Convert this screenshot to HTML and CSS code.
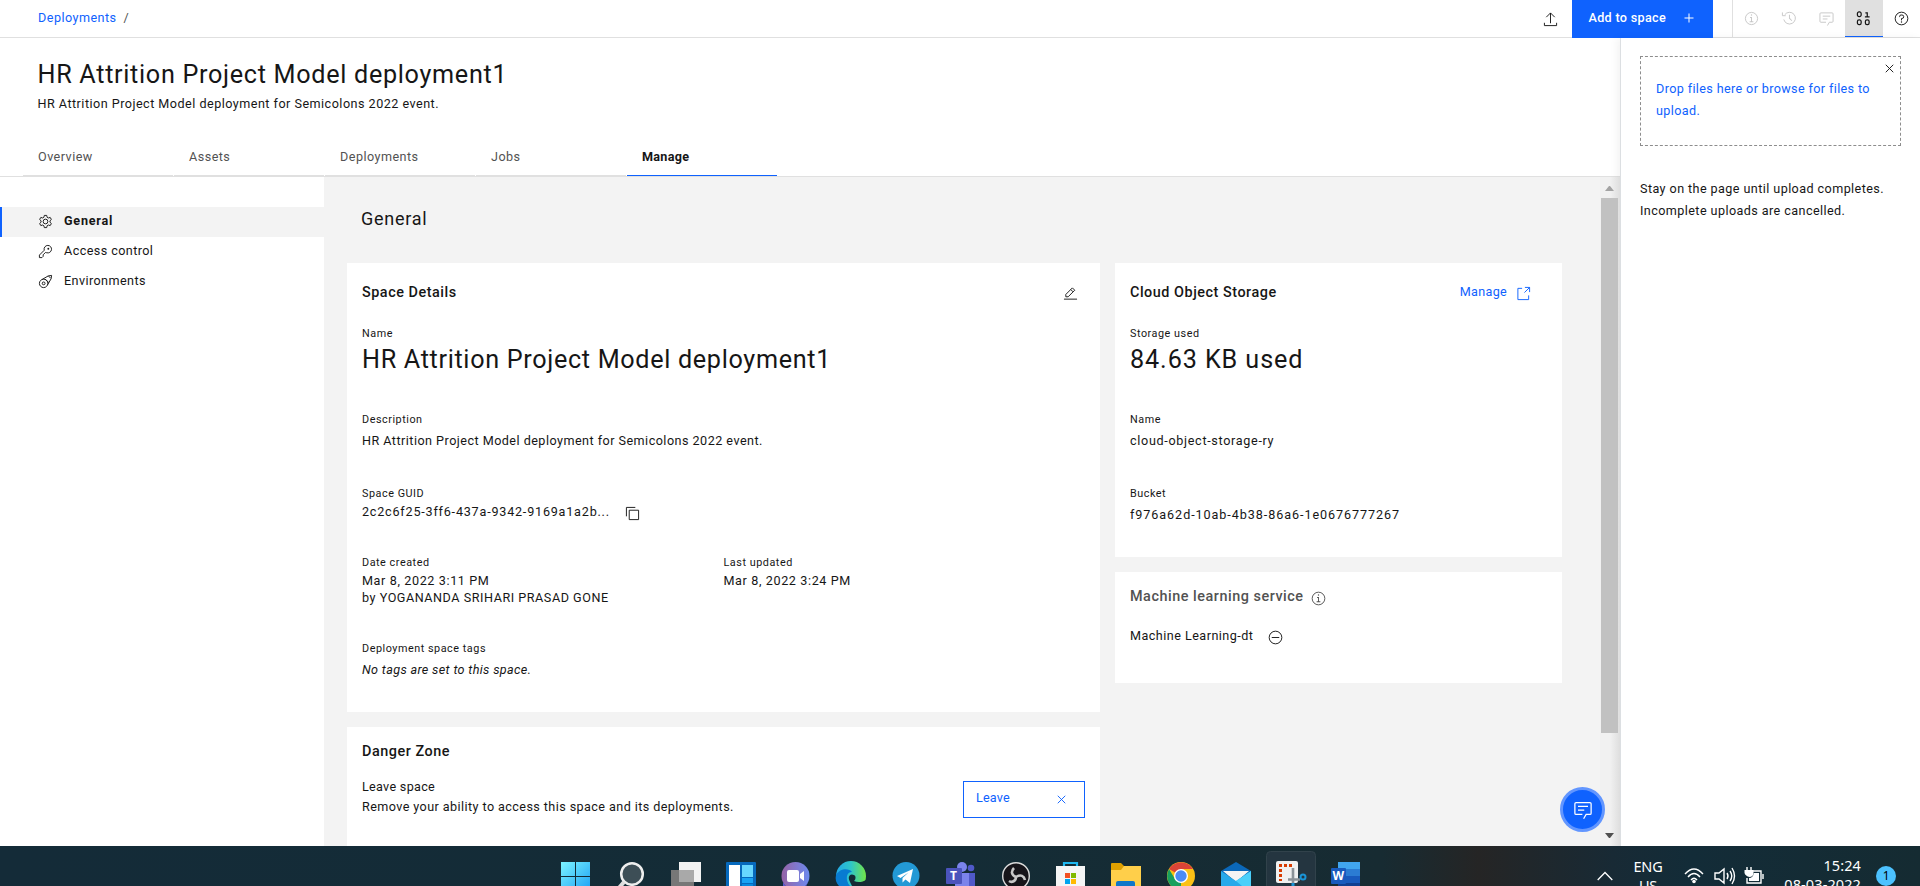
FILE: index.html
```html
<!DOCTYPE html>
<html lang="en">
<head>
<meta charset="utf-8">
<title>Deployments</title>
<link rel="stylesheet" href="styles.css">
</head>
<body>
<div class="screen">
  <header class="topbar">
    <nav class="crumbs"><a class="link">Deployments</a><span class="slash">/</span></nav>
    <div class="actions">
      <svg class="icon upload" viewBox="0 0 32 32"><path class="ln" d="M16 24V2M7 11l9-9 9 9M3 23v6h26v-6"/></svg>
      <button class="add"><span>Add to space</span><svg viewBox="0 0 32 32"><path d="M17 15V7h-2v8H7v2h8v8h2v-8h8v-2z"/></svg></button>
      <div class="tools">
        <div class="tool dim"><svg class="icon" viewBox="0 0 32 32"><path d="M17 22v-9h-4v2h2v7h-3v2h8v-2zM16 7a1.5 1.5 0 1 0 0 3 1.5 1.5 0 0 0 0-3z"/><circle class="ln" cx="16" cy="16" r="13"/></svg></div>
        <div class="tool dim"><svg class="icon" viewBox="0 0 32 32"><path d="M22.600 21.400 17 15.800V8h2v7l5 5z"/><path class="ln" d="M6 18A12.500 12.500 0 1 0 8 8M3 3v7h7"/></svg></div>
        <div class="tool dim"><svg class="icon" viewBox="0 0 32 32"><path class="ln" d="M18 31l4-7h6a2 2 0 0 0 2-2V6a2 2 0 0 0-2-2H4a2 2 0 0 0-2 2v16a2 2 0 0 0 2 2h11M8 11h16M8 17h10"/></svg></div>
        <div class="tool active"><svg class="icon" viewBox="0 0 32 32"><g class="ln bold"><rect x="3" y="2" width="8" height="10" rx="3.500"/><rect x="3" y="19" width="8" height="10" rx="3.500"/><rect x="20" y="19" width="8" height="10" rx="3.500"/><path d="M20 4h4v8.500M19 12.500h10"/></g></svg></div>
        <div class="tool"><svg class="icon" viewBox="0 0 32 32"><circle class="ln" cx="16" cy="16" r="13.500"/><path class="ln" d="M12 13v-1.500a3 3 0 0 1 3-3h2a3.500 3.500 0 0 1 0 7.500h-1v4"/><circle cx="16" cy="23.500" r="1.500"/></svg></div>
      </div>
    </div>
  </header>

  <div class="workspace">
    <main class="page">
      <section class="head">
        <h1>HR Attrition Project Model deployment1</h1>
        <p>HR Attrition Project Model deployment for Semicolons 2022 event.</p>
        <nav class="tabs"><a>Overview</a><a>Assets</a><a>Deployments</a><a>Jobs</a><a class="on">Manage</a></nav>
      </section>
      <div class="body">
        <aside class="side">
          <a class="on"><svg class="icon" viewBox="0 0 32 32"><path class="ln" d="M13.500 3h5l1 4 2.500 1.500 4-1.200 2.500 4.400-3 2.800v3l3 2.800-2.500 4.400-4-1.200-2.500 1.500-1 4h-5l-1-4L10 23.500l-4 1.200-2.500-4.400 3-2.800v-3l-3-2.800L6 7.300l4 1.200L12.500 7z"/><circle class="ln" cx="16" cy="16" r="5"/></svg>General</a>
          <a><svg class="icon" viewBox="0 0 32 32"><path class="ln" d="M21 3a8 8 0 0 0-7.700 10.300L3 23.600V29h5.400l2.600-2.600V23l5-5 2.700.700A8 8 0 1 0 21 3z"/><circle cx="22" cy="10" r="2"/></svg>Access control</a>
          <a><svg class="icon" viewBox="0 0 32 32"><circle class="ln" cx="12" cy="20" r="9"/><circle class="ln" cx="12" cy="20" r="3"/><path class="ln" d="M9 11.500 22 4l7-1-1 7-7.500 13M15 11l8 7M22 4l5 5"/></svg>Environments</a>
        </aside>
        <section class="content">
          <h2>General</h2>
          <div class="columns">
            <div class="col left">
              <article class="card details">
                <div class="cardhead"><h3>Space Details</h3><svg class="icon" viewBox="0 0 32 32"><path d="M2 27h28v2H2z"/><path class="ln" d="M6 23v-5L20 4l5 5-14 14zM16.500 7.500l5 5"/></svg></div>
                <div class="label">Name</div>
                <div class="big">HR Attrition Project Model deployment1</div>
                <div class="label l2">Description</div>
                <div class="value v2">HR Attrition Project Model deployment for Semicolons 2022 event.</div>
                <div class="label l3">Space GUID</div>
                <div class="value guid">2c2c6f25-3ff6-437a-9342-9169a1a2b...<svg class="icon" viewBox="0 0 32 32"><path class="ln" d="M9 9h20v20H9zM3 22V3h19"/></svg></div>
                <div class="dates">
                  <div><div class="label">Date created</div><div class="value date">Mar 8, 2022 3:11 PM</div><div class="value by">by YOGANANDA SRIHARI PRASAD GONE</div></div>
                  <div><div class="label">Last updated</div><div class="value date">Mar 8, 2022 3:24 PM</div></div>
                </div>
                <div class="label">Deployment space tags</div>
                <div class="value v2 none">No tags are set to this space.</div>
              </article>
              <article class="card danger">
                <div><h3>Danger Zone</h3><div class="value leave">Leave space</div><div class="value remove">Remove your ability to access this space and its deployments.</div></div>
                <button class="leavebtn"><span>Leave</span><svg viewBox="0 0 32 32"><path class="ln" d="M8 8l16 16M24 8 8 24"/></svg></button>
              </article>
            </div>
            <div class="col right">
              <article class="card storage">
                <div class="cardhead"><h3>Cloud Object Storage</h3><a class="link manage">Manage<svg class="icon" viewBox="0 0 32 32"><path class="ln" d="M13 5H4v24h23v-9M19 3h10v10M29 3 18 14"/></svg></a></div>
                <div class="label">Storage used</div>
                <div class="big used">84.63 KB used</div>
                <div class="label l2">Name</div>
                <div class="value v2 cos">cloud-object-storage-ry</div>
                <div class="label l3">Bucket</div>
                <div class="value v2 bucket">f976a62d-10ab-4b38-86a6-1e0676777267</div>
              </article>
              <article class="card ml">
                <h3>Machine learning service<svg class="icon" viewBox="0 0 32 32"><path d="M17 22v-9h-4v2h2v7h-3v2h8v-2zM16 7a1.500 1.500 0 1 0 0 3 1.500 1.500 0 0 0 0-3z"/><circle class="ln" cx="16" cy="16" r="13.500"/></svg></h3>
                <div class="value mlrow">Machine Learning-dt<svg class="icon" viewBox="0 0 32 32"><circle class="ln" cx="16" cy="16" r="13.500"/><path class="ln" d="M8 16h16"/></svg></div>
              </article>
            </div>
          </div>
        </section>
        <div class="scroll"><i class="up"></i><i class="thumb"></i><i class="down"></i></div>
        <button class="chat"><svg viewBox="0 0 32 32"><path class="ln" d="M17 30l4-7h6a2 2 0 0 0 2-2V6a2 2 0 0 0-2-2H5a2 2 0 0 0-2 2v15a2 2 0 0 0 2 2h10M8 10h16M8 16h10"/></svg></button>
      </div>
    </main>
    <aside class="panel">
      <div class="drop"><svg viewBox="0 0 32 32"><path class="ln" d="M8 8l16 16M24 8 8 24"/></svg>Drop files here or browse for files to upload.</div>
      <p>Stay on the page until upload completes. Incomplete uploads are cancelled.</p>
    </aside>
  </div>

  <footer class="taskbar">
    <div class="apps">
      <svg viewBox="0 0 54 40"><defs><linearGradient id="win" x2="1" y2="1"><stop stop-color="#7cf3ff"/><stop offset="1" stop-color="#1ba0f5"/></linearGradient></defs><path fill="url(#win)" d="M13 16h14v14H13zM28 16h14v14H28zM13 31h14v14H13zM28 31h14v14H28z"/></svg>
      <svg viewBox="0 0 54 40"><circle cx="29" cy="28" r="10.800" fill="#3d4e56" stroke="#eee" stroke-width="2.500"/><path d="M21 36l-6 7" stroke="#ddd" stroke-width="4"/></svg>
      <svg viewBox="0 0 54 40"><path fill="#f2f2f2" d="M21 16h22v20H21z"/><path fill="#777" d="M13 24h23v16H13z"/><path fill="#a9a9a9" d="M21 24h15v12H21z"/></svg>
      <svg viewBox="0 0 54 40"><rect x="13" y="16" width="30" height="30" rx="1" fill="#0669bd"/><path fill="#fff" d="M16 19h11v24H16z"/><path fill="#67d7ff" d="M29 19h11v12H29z"/><path fill="#19a3f4" d="M29 32h11v5H29z"/><path fill="#0789df" d="M29 38h11v4H29z"/></svg>
      <svg viewBox="0 0 54 40"><defs><linearGradient id="meet" x2="1"><stop stop-color="#9663a5"/><stop offset="1" stop-color="#6c8af0"/></linearGradient></defs><circle cx="27.500" cy="30" r="14" fill="url(#meet)"/><path fill="#5a58cc" d="M15 36a14 14 0 0 0 25 0l-3 7H15z"/><rect x="19" y="24" width="12" height="12" rx="2" fill="#fff"/><path fill="#fff" d="M32 28l4-3v10l-4-3z"/></svg>
      <svg viewBox="0 0 54 40"><defs><linearGradient id="edge" x2="1"><stop stop-color="#22a8e8"/><stop offset=".5" stop-color="#2fc6c7"/><stop offset="1" stop-color="#72e547"/></linearGradient></defs><circle cx="28" cy="30" r="15" fill="url(#edge)"/><path fill="#087bd1" d="M13 29c4-7 13-7 16-3-6 0-7 8-2 14H16c-3-3-4-7-3-11z"/><path fill="#142a34" d="M27 36c-3-5 0-9 4-7 2 1 2 4 0 6 4 2 9 1 12-1v8H30z"/></svg>
      <svg viewBox="0 0 54 40"><circle cx="28" cy="29.500" r="13.500" fill="#2399d5"/><path fill="#fff" d="M19 30l16-7-3 14-4.500-3.500-3 3v-4.500l6-5.500-8 5.500z"/></svg>
      <svg viewBox="0 0 54 40"><circle cx="29" cy="21" r="5" fill="#7b83eb"/><circle cx="38" cy="22" r="3.300" fill="#5059c9"/><path fill="#5059c9" d="M30 27h12v13H30z"/><path fill="#7b83eb" d="M22 27h14v13H22z"/><rect x="13" y="22" width="16" height="16" rx="1" fill="#4b53bc"/><text class="glyph" x="17" y="34">T</text></svg>
      <svg viewBox="0 0 54 40"><circle cx="28" cy="30" r="13.300" fill="#17151a" stroke="#ddd" stroke-width="1.400"/><path fill="none" stroke="#c8c8c8" stroke-width="2.600" d="M28 31c-5-2-5-6-2-9M28 31c5-3 8-1 9 3M28 31c0 4-4 6-7 4"/></svg>
      <svg viewBox="0 0 54 40"><path fill="none" stroke="#1fb8f0" stroke-width="2.200" d="M21 22v-5h13v5"/><path fill="#f5f5f5" d="M13 20h29v20H13z"/><path fill="#f25022" d="M22 27h5v5h-5z"/><path fill="#7fba00" d="M28 27h5v5h-5z"/><path fill="#00a4ef" d="M22 33h5v5h-5z"/><path fill="#ffb900" d="M28 33h5v5h-5z"/></svg>
      <svg viewBox="0 0 54 40"><path fill="#dfa000" d="M13 18q0-1 1-1h9l3 3v8H13z"/><path fill="#ffcf4a" d="M13 24h10l3-4h17v20H13z"/><path fill="#0f76c8" d="M18 40v-3q0-2 2-2h15q2 0 2 2v3z"/></svg>
      <svg viewBox="0 0 54 40"><circle cx="28" cy="30" r="14" fill="#fbc116"/><path fill="#db4437" d="M28 30 16 23a14 14 0 0 1 24 0H28z"/><path fill="#18a05e" d="M28 44A14 14 0 0 1 16 23l6 10 6 3z"/><circle cx="28" cy="30" r="7" fill="#fff"/><circle cx="28" cy="30" r="5.700" fill="#4b8bf5"/></svg>
      <svg viewBox="0 0 54 40"><path fill="#0b68b9" d="M13 25l15-9 15 9v5H13z"/><path fill="#f4f4f4" d="M15 25h26L28 36z"/><path fill="#27a9ea" d="M13 25l15 10 15-10v15H13z"/><path fill="#4bd0fa" d="M28 35l15-10v15h-9z"/></svg>
      <svg viewBox="0 0 54 40"><rect x="3.500" y="5.500" width="49" height="50" rx="4" fill="#243540" stroke="#31424b"/><rect x="13" y="15" width="22" height="22" rx="2" fill="#f0f0f0"/><path fill="#d83b01" d="M16 18h3v3h-3zM21 18h3v3h-3zM26 18h3v3h-3zM16 23h3v3h-3zM16 28h3v3h-3zM16 33h3v2h-3z"/><path fill="none" stroke="#8c9298" stroke-width="2.600" d="M30 22v15M25 33.500h12"/><circle cx="40" cy="31" r="2.500" fill="none" stroke="#1a94d6" stroke-width="2"/><path stroke="#1a94d6" stroke-width="3" d="M30 37v3"/></svg>
      <svg viewBox="0 0 54 40"><path fill="#41a5ee" d="M20 16h22v8H20z"/><path fill="#2b7cd3" d="M20 23h22v7H20z"/><path fill="#185abd" d="M20 30h22v7H20z"/><path fill="#103f91" d="M20 37h22v3H20z"/><rect x="13" y="22" width="15" height="16" rx="1" fill="#185abd"/><text class="glyph" x="14.500" y="34">W</text></svg>
    </div>
    <div class="tray">
      <svg class="caret" viewBox="0 0 16 10"><path d="M.7 9 8 1.500 15.300 9"/></svg>
      <div class="lang">ENG<br>US</div>
      <svg class="trayicons" viewBox="0 0 82 18"><g fill="none" stroke="#fff" stroke-width="1.400"><path d="M1 7q9-10 18 0M4 10q6-7 12 0M7 13q3-3.500 6 0"/><path d="M31 6h4l5-4v14l-5-4h-4zM43 6q2 3 0 6M46 4q3.500 5 0 10M48 1q5 8 0 16"/><path d="M69 4h8v12H63v-5M79 7v5M63 0v4M67 0v4"/></g><circle cx="10" cy="14.500" r="1.800" fill="#fff"/><path fill="#fff" d="M60.500 3h9v4q-1 3-4 3-4-1-5-4zM70 6h5v8H65v-3q4 0 5-5z"/></svg>
      <div class="clock">15:24<br>08-03-2022</div>
      <div class="badge">1</div>
    </div>
  </footer>
</div>
</body>
</html>
```
FILE: styles.css
```css
* { box-sizing: border-box; margin: 0; }
body { width: 1920px; height: 886px; overflow: hidden; background: #fff; color: #161616; font: 12.6px/16px Roboto, "Noto Sans", sans-serif; letter-spacing: .47px; }
button { font: inherit; letter-spacing: inherit; border: 0; padding: 0; }
svg { display: block; flex: none; fill: currentColor; overflow: visible; }
.ln { fill: none; stroke: currentColor; stroke-width: 2; }
.ln.bold { stroke-width: 2.6; }
.icon { width: 15px; height: 15px; }
.link { color: #0f62fe; }
.screen { height: 886px; display: flex; flex-direction: column; }

.topbar { height: 38px; flex: none; display: flex; justify-content: space-between; border-bottom: 1px solid #e0e0e0; }
.crumbs { display: flex; gap: 7px; padding: 10px 0 0 38px; }
.slash { color: #525252; }
.actions { display: flex; }
.upload { margin: 12px 14px 0 0; }
.add { width: 141px; height: 38px; display: flex; justify-content: space-between; background: #0f62fe; color: #fff; padding: 10px 16px 0 17px; font-weight: 500; letter-spacing: .32px; }
.add svg { width: 16px; height: 16px; }
.tools { display: flex; margin-left: 19px; border-left: 1px solid #e0e0e0; }
.tool { width: 37.5px; height: 37px; display: grid; place-items: center; }
.dim { color: #c6c6c6; }
.active { background: #e0e0e0; border-bottom: 1px solid #0f62fe; }

.workspace { display: flex; height: 808px; }
.page { width: 1620px; display: flex; flex-direction: column; }
.head { height: 139px; flex: none; border-bottom: 1px solid #e0e0e0; }
h1 { font-size: 25.2px; font-weight: 400; line-height: 32px; padding: 21px 0 0 37.5px; letter-spacing: .69px; }
.head p { padding: 5px 0 0 37.5px; letter-spacing: .48px; }
.tabs { display: flex; gap: 1px; margin: 34px 0 0 23px; }
.tabs a { width: 150px; height: 30px; padding: 3px 0 0 15px; color: #525252; border-bottom: 1px solid #e0e0e0; }
.tabs .on { color: #161616; font-weight: 700; letter-spacing: .3px; border-color: #0f62fe; }
.body { display: flex; flex: 1; min-height: 0; position: relative; }
.side { width: 324px; padding-top: 30px; }
.side a { display: flex; gap: 11px; height: 30px; padding: 6px 0 0 36px; border-left: 2px solid transparent; letter-spacing: .42px; }
.side .icon { margin-top: 1px; }
.side a.on { background: #f3f3f3; border-color: #0f62fe; font-weight: 700; letter-spacing: .75px; }
.content { width: 1276px; background: #f3f3f3; padding: 30px 0 0 23px; overflow: hidden; }
h2 { font-size: 18px; font-weight: 400; line-height: 24px; padding-left: 14px; letter-spacing: .75px; }
.columns { display: flex; gap: 15px; margin-top: 32px; }
.left { width: 753px; }
.right { width: 447px; }
.col { display: flex; flex-direction: column; gap: 15px; }
.card { background: #fff; padding: 21px 15px 0; }
.details { height: 449px; }
.storage { height: 294px; }
.ml { height: 111px; }
.danger { height: 140px; }
.cardhead { display: flex; justify-content: space-between; height: 43px; }
h3 { font-size: 14.4px; line-height: 18px; font-weight: 500; letter-spacing: .53px; }
.details .cardhead { padding-right: 7px; }
.cardhead .icon { margin-top: 2px; }
.label { font-size: 10.8px; line-height: 14px; letter-spacing: .54px; }
.big { font-size: 25.2px; line-height: 32px; margin-top: 3px; letter-spacing: .67px; }
.used { letter-spacing: .9px; }
.l2 { margin-top: 37px; }
.v2 { margin-top: 6px; }
.l3 { margin-top: 38px; }
.guid { display: flex; gap: 15px; margin-top: 3px; letter-spacing: .79px; }
.guid .icon { margin-top: 2px; }
.dates { display: flex; margin: 35px 0 36px; }
.dates > div { width: 362px; }
.date { margin-top: 3px; letter-spacing: .62px; }
.by { margin-top: 1px; letter-spacing: .54px; }
.none { font-style: italic; letter-spacing: .35px; }
.cos { letter-spacing: .68px; }
.bucket { letter-spacing: .93px; }
.danger { display: flex; justify-content: space-between; padding-top: 16px; }
.leave { margin-top: 18px; letter-spacing: .3px; }
.remove { margin-top: 4px; letter-spacing: .42px; }
.leavebtn { width: 122px; height: 37px; margin-top: 38px; display: flex; justify-content: space-between; padding: 8px 15px 0 12px; background: #fff; border: 1px solid #0f62fe; color: #0f62fe; letter-spacing: .2px; }
.leavebtn svg { width: 15px; height: 15px; margin-top: 2px; }
.manage { display: flex; gap: 9px; padding-right: 16px; letter-spacing: .3px; }
.ml { padding-top: 16px; }
.ml h3 { display: flex; gap: 7px; color: #525252; }
.ml h3 .icon { margin-top: 3px; }
.mlrow { display: flex; gap: 15px; margin-top: 22px; }
.mlrow .icon { margin-top: 2px; }
.scroll { width: 20px; background: linear-gradient(90deg, #f1f1f1 50%, #dedede); display: flex; flex-direction: column; padding: 9px 0 8px 1px; }
.up, .down { margin-left: 4px; width: 9px; border: 4.5px solid transparent; border-top-width: 0; border-bottom: 5px solid #a3a3a3; }
.down { border-bottom-width: 0; border-top: 5px solid #505050; margin-top: auto; }
.thumb { width: 17px; height: 535px; margin-top: 7px; background: #c1c1c1; }
.chat { position: absolute; left: 1560px; top: 610px; width: 45px; height: 45px; border-radius: 50%; background: #0f62fe; border: 3px solid #6296ff; color: #fff; display: grid; place-items: center; }
.chat svg { width: 22px; height: 20px; }
.panel { width: 300px; border-left: 1px solid #dcdfe2; padding: 18px 19px 0 19px; line-height: 22px; background: #fff; box-shadow: -3px 0 8px rgba(0,0,0,.05); letter-spacing: .42px; }
.drop { position: relative; height: 90px; border: 1px dashed #8d8d8d; padding: 21px 15px; color: #0f62fe; letter-spacing: .37px; }
.drop svg { position: absolute; right: 3px; top: 4px; width: 15px; height: 15px; color: #161616; }
.panel p { margin-top: 32px; }

.taskbar { height: 40px; display: flex; justify-content: space-between; overflow: hidden; padding-left: 548px; background: linear-gradient(90deg, #142b38 0, #142c36 50%, #172b32 72%, #252525 77%, #182a35 84%, #132c38 88%, #152b32); color: #fff; }
.apps { display: flex; gap: 1px; }
.apps svg { width: 54px; height: 40px; overflow: hidden; }
.glyph { fill: #fff; font: 700 12px "Open Sans", sans-serif; letter-spacing: 0; }
.tray { display: flex; width: 323px; font: 14.5px/19px "Noto Sans", sans-serif; letter-spacing: -.2px; }
.caret { width: 16px; height: 10px; margin-top: 25px; fill: none; stroke: #fff; stroke-width: 1.3; }
.lang { width: 30px; margin: 11px 0 0 20px; text-align: center; }
.trayicons { width: 82px; height: 18px; margin: 21px 0 0 21px; }
.clock { width: 80px; margin: 10px 0 0 15px; text-align: right; white-space: nowrap; letter-spacing: .1px; }
.badge { width: 20px; height: 20px; margin: 20px 0 0 15px; border-radius: 50%; background: #4cc2ff; color: #000; font-size: 12px; line-height: 20px; text-align: center; }
```
